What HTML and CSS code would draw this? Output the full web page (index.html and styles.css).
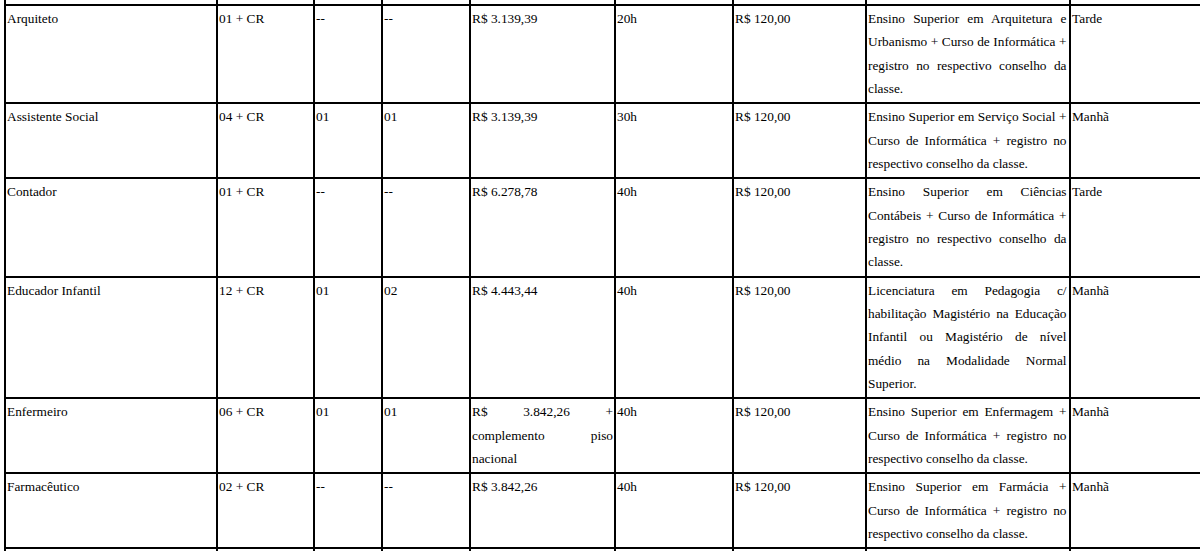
FILE: index.html
```html
<!DOCTYPE html>
<html lang="pt-BR">
<head>
<meta charset="utf-8">
<title>Cargos</title>
<link rel="stylesheet" href="styles.css">
</head>
<body>
<div class="sheet">
  <div class="cell stub first"></div><div class="cell stub"></div><div class="cell stub"></div><div class="cell stub"></div><div class="cell stub"></div><div class="cell stub"></div><div class="cell stub"></div><div class="cell stub"></div><div class="cell stub"></div>

  <div class="cell first">Arquiteto</div>
  <div class="cell">01 + CR</div>
  <div class="cell">--</div>
  <div class="cell">--</div>
  <div class="cell">R$ 3.139,39</div>
  <div class="cell">20h</div>
  <div class="cell">R$ 120,00</div>
  <div class="cell desc">Ensino Superior em Arquitetura e Urbanismo + Curso de Informática + registro no respectivo conselho da classe.</div>
  <div class="cell">Tarde</div>

  <div class="cell first">Assistente Social</div>
  <div class="cell">04 + CR</div>
  <div class="cell">01</div>
  <div class="cell">01</div>
  <div class="cell">R$ 3.139,39</div>
  <div class="cell">30h</div>
  <div class="cell">R$ 120,00</div>
  <div class="cell desc">Ensino Superior em Serviço Social + Curso de Informática + registro no respectivo conselho da classe.</div>
  <div class="cell">Manhã</div>

  <div class="cell first">Contador</div>
  <div class="cell">01 + CR</div>
  <div class="cell">--</div>
  <div class="cell">--</div>
  <div class="cell">R$ 6.278,78</div>
  <div class="cell">40h</div>
  <div class="cell">R$ 120,00</div>
  <div class="cell desc">Ensino Superior em Ciências Contábeis + Curso de Informática + registro no respectivo conselho da classe.</div>
  <div class="cell">Tarde</div>

  <div class="cell first">Educador Infantil</div>
  <div class="cell">12 + CR</div>
  <div class="cell">01</div>
  <div class="cell">02</div>
  <div class="cell">R$ 4.443,44</div>
  <div class="cell">40h</div>
  <div class="cell">R$ 120,00</div>
  <div class="cell desc">Licenciatura em Pedagogia c/ habilitação Magistério na Educação Infantil ou Magistério de nível médio na Modalidade Normal Superior.</div>
  <div class="cell">Manhã</div>

  <div class="cell first">Enfermeiro</div>
  <div class="cell">06 + CR</div>
  <div class="cell">01</div>
  <div class="cell">01</div>
  <div class="cell">R$ 3.842,26 + complemento piso nacional</div>
  <div class="cell">40h</div>
  <div class="cell">R$ 120,00</div>
  <div class="cell desc">Ensino Superior em Enfermagem + Curso de Informática + registro no respectivo conselho da classe.</div>
  <div class="cell">Manhã</div>

  <div class="cell first">Farmacêutico</div>
  <div class="cell">02 + CR</div>
  <div class="cell">--</div>
  <div class="cell">--</div>
  <div class="cell">R$ 3.842,26</div>
  <div class="cell">40h</div>
  <div class="cell">R$ 120,00</div>
  <div class="cell desc">Ensino Superior em Farmácia + Curso de Informática + registro no respectivo conselho da classe.</div>
  <div class="cell">Manhã</div>

  <div class="cell tail first"></div><div class="cell tail"></div><div class="cell tail"></div><div class="cell tail"></div><div class="cell tail"></div><div class="cell tail"></div><div class="cell tail"></div><div class="cell tail"></div><div class="cell tail"></div>
</div>
</body>
</html>
```
FILE: styles.css
```css
html, body {
  margin: 0;
  padding: 0;
  background: #fff;
  overflow: hidden;
}

body {
  font-family: "Liberation Serif", "Times New Roman", serif;
  font-size: 13.333px;
  color: #000;
}

.sheet {
  display: grid;
  grid-template-columns: 214px 97px 68px 88px 145px 118px 133px 204px 200px;
  width: 1267px;
  margin-left: 4px;
}

.cell {
  box-sizing: border-box;
  padding: 1px 1px 2px 1px;
  border-right: 2px solid #000;
  border-bottom: 2px solid #000;
  line-height: 23.333px;
  text-align: justify;
  overflow-wrap: normal;
}

.cell.first {
  border-left: 2px solid #000;
}

.cell.desc {
  padding-right: 2.5px;
}

.cell.stub {
  height: 6px;
  padding: 0;
}

.cell.tail {
  height: 30px;
  padding: 0;
  border-bottom: none;
}
```
